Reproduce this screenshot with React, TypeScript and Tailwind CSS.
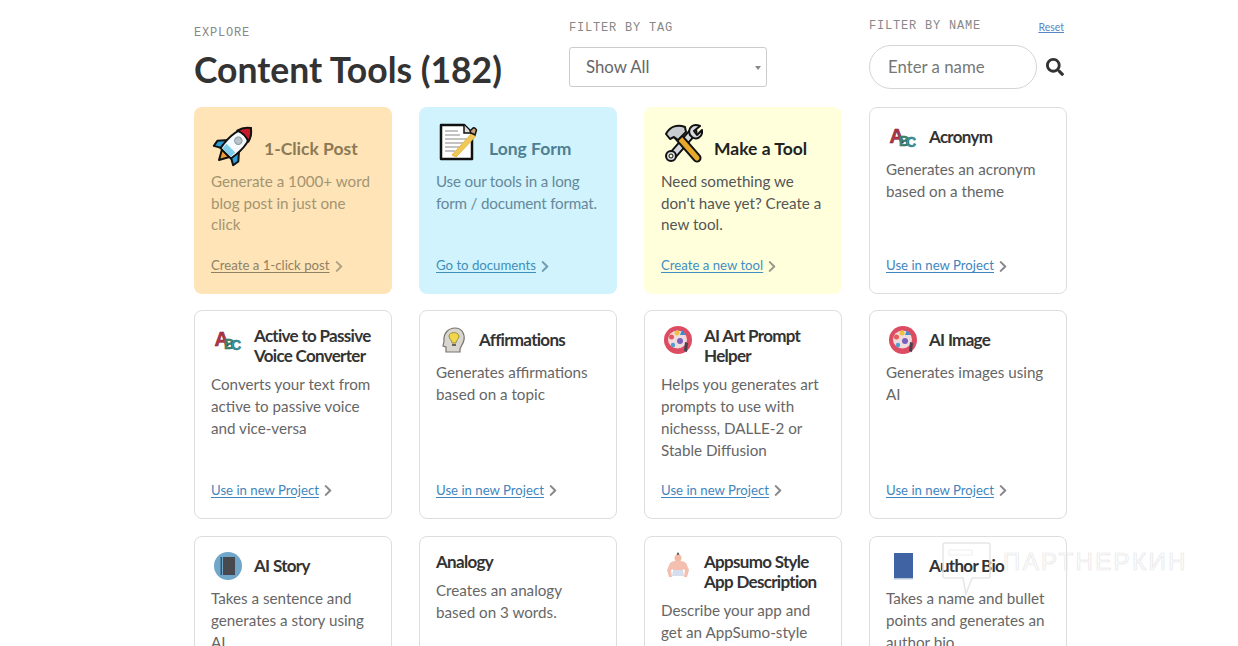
import React from "react";
import { FaChevronRight, FaSearch } from "react-icons/fa";

function Rocket() {
  return (
    <svg viewBox="0 0 40 40" className="h-10 w-10 overflow-visible">
      <g transform="translate(1 2) rotate(45 20 20) translate(-1 -0.800) scale(1.050)" stroke="#111" strokeWidth="1.900" strokeLinejoin="round">
        <path d="M15 31 L20 40 L25 31Z" fill="#f39a2d" />
        <path d="M13 20 L6 28 L7 34 L14 30Z" fill="#2b9fd6" />
        <path d="M27 20 L34 28 L33 34 L26 30Z" fill="#2b9fd6" />
        <path d="M20 -3 C27 3 30 13 27 31 H13 C10 13 13 3 20 -3Z" fill="#f4fafd" />
        <path d="M20 -3 C24 0 26.500 4 27.500 8 C23 6 17 6 12.500 8 C13.500 4 16 0 20 -3Z" fill="#c9172b" />
        <circle cx="20" cy="14" r="3.500" fill="#b9c3cb" strokeWidth="1" stroke="#8d99a3" />
        <path d="M14 24 H26 L25.500 30 H14.500Z" fill="#7fcdea" stroke="none" />
      </g>
    </svg>
  );
}

function Doc() {
  return (
    <svg viewBox="0 0 40 40" className="h-10 w-10">
      <path d="M3 2 H26 L34 10 V36 H3Z" fill="#fff" stroke="#111" strokeWidth="2.500" strokeLinejoin="round" />
      <path d="M26 2 V10 H34" fill="#ddd" stroke="#111" strokeWidth="1.500" />
      <path d="M7 8 H20 M7 12 H22 M7 16 H30 M7 20 H28 M7 24 H22 M7 28 H17" stroke="#888" strokeWidth="1" />
      <path d="M14 32 L34 10 L38 13 L18 34Z" fill="#f0c75a" stroke="#e8b93a" strokeWidth="1" />
      <path d="M32 8 L35 5 Q37 4 38.500 7 L37 12 L33 10Z" fill="#c9a27a" stroke="#111" strokeWidth="1.500" />
    </svg>
  );
}

function Tools() {
  return (
    <svg viewBox="0 0 40 40" className="h-10 w-10">
      <path d="M9 33 L30 9" stroke="#111" strokeWidth="9" strokeLinecap="round" />
      <path d="M9 33 L30 9" stroke="#d4d8dc" strokeWidth="5" strokeLinecap="round" />
      <circle cx="8" cy="33" r="5" fill="#d4d8dc" stroke="#111" strokeWidth="2" />
      <circle cx="8" cy="33" r="2" fill="#ffffdc" stroke="#111" strokeWidth="1" />
      <path d="M27 12 C24 5 30 0 37 3 L31 8 L34 12 L39 7 C40 15 33 17 29 14Z" fill="#d4d8dc" stroke="#111" strokeWidth="2" strokeLinejoin="round" />
      <path d="M34 35 L13 11" stroke="#111" strokeWidth="9" strokeLinecap="round" />
      <path d="M34 35 L13 11" stroke="#e8a92b" strokeWidth="5" strokeLinecap="round" />
      <path d="M3 11 C7 3 15 1 22 4 L23 9 L15 17 L11 14 L7 16Z" fill="#c8ccd0" stroke="#111" strokeWidth="2" strokeLinejoin="round" />
    </svg>
  );
}

function Abc() {
  return (
    <svg viewBox="0 0 30 30" className="h-[30px] w-[30px]">
      <text x="1.500" y="21" fontFamily="Liberation Sans" fontWeight="700" fontSize="20" fill="#b5354c" stroke="#7c1f33" strokeWidth=".6">A</text>
      <text x="11" y="24" fontFamily="Liberation Sans" fontWeight="700" fontSize="14" fill="#3f8f74" stroke="#23594a" strokeWidth=".5">B</text>
      <text x="18" y="25" fontFamily="Liberation Sans" fontWeight="700" fontSize="14" fill="#3aa0a8" stroke="#1f6268" strokeWidth=".5">C</text>
    </svg>
  );
}

function Head() {
  return (
    <svg viewBox="0 0 30 30" className="h-[30px] w-[30px]">
      <path d="M8 27 V22 L5 21 L6 16 C5 8 11 3 17 3 C24 3 27 9 26 15 C25 19 23 21 22 24 V27Z" fill="#d8d6cf" stroke="#77746c" strokeWidth="1.200" />
      <path d="M11 11 C11 7 20 6 21 11 C21 14 18 15 18 18 H14 C14 15 11 14 11 11Z" fill="#f2d649" stroke="#8a7b2c" strokeWidth=".8" />
      <path d="M14 19 H18 V21 H14Z" fill="#666" />
    </svg>
  );
}

function Palette() {
  return (
    <svg viewBox="0 0 30 30" className="h-[30px] w-[30px]">
      <circle cx="15" cy="15" r="14" fill="#dc4d63" />
      <ellipse cx="14.500" cy="14.500" rx="9.500" ry="9" fill="#f0dcdc" />
      <circle cx="8.500" cy="12" r="2.500" fill="#e65a5a" />
      <circle cx="14" cy="8" r="2.500" fill="#f0c040" />
      <path d="M19 5 L23 10 H17Z" fill="#3a8fd0" />
      <circle cx="17" cy="16" r="3" fill="#7a5fc0" />
      <circle cx="10" cy="20" r="2.200" fill="#4fa0d0" />
      <path d="M22 17 L25 18 L24 27 L21 26Z" fill="#4a4050" />
    </svg>
  );
}

function BookCircle() {
  return (
    <svg viewBox="0 0 30 30" className="h-[30px] w-[30px]">
      <circle cx="15" cy="15" r="14" fill="#6fa6c9" />
      <rect x="10" y="6" width="12" height="18" fill="#48494f" />
      <rect x="7.500" y="6" width="1.500" height="18" fill="#35546b" />
    </svg>
  );
}

function Sumo() {
  return (
    <svg viewBox="0 0 30 30" className="h-[30px] w-[30px]">
      <path d="M15 1 L17 5 H13Z" fill="#333" />
      <circle cx="15" cy="7" r="3.500" fill="#f2b9a3" />
      <path d="M7 12 C10 9 20 9 23 12 L26 19 L24 26 H21 L22 19 L20 18 V23 H10 V18 L8 19 L9 26 H6 L4 19Z" fill="#f4bfae" />
      <path d="M10 19 H20 L21 25 H9Z" fill="#d4deee" />
    </svg>
  );
}

function Book() {
  return (
    <svg viewBox="0 0 30 30" className="h-[30px] w-[30px]">
      <rect x="6" y="2" width="19" height="25" fill="#3f63a3" />
      <rect x="6" y="27" width="19" height="1.500" fill="#b9c6dc" />
    </svg>
  );
}

type Tool = { t: string; d: string; i?: React.ReactNode };

const first: { t: string; d: string; l: string; i: React.ReactNode; card: string; title: string; body: string; link: string; chev: string }[] = [
  { t: "1-Click Post", d: "Generate a 1000+ word blog post in just one click", l: "Create a 1-click post", i: <Rocket />, card: "bg-[#ffe4b8]", title: "text-[#8b7a55]", body: "text-[#a39471]", link: "text-[#8f8163]", chev: "text-[#b0a384]" },
  { t: "Long Form", d: "Use our tools in a long form / document format.", l: "Go to documents", i: <Doc />, card: "bg-[#d0f3fe]", title: "text-[#4f7f90]", body: "text-[#66899a] -mr-[8px] tracking-[-0.2px]", link: "text-[#3f8fb8]", chev: "text-[#6f9db2]" },
  { t: "Make a Tool", d: "Need something we don't have yet? Create a new tool.", l: "Create a new tool", i: <Tools />, card: "bg-[#ffffdc]", title: "text-[#222222]", body: "text-[#555555]", link: "text-[#3f8fc4]", chev: "text-[#9a9a8a]" },
];

const tools: Tool[] = [
  { t: "Acronym", d: "Generates an acronym based on a theme", i: <Abc /> },
  { t: "Active to Passive Voice Converter", d: "Converts your text from active to passive voice and vice-versa", i: <Abc /> },
  { t: "Affirmations", d: "Generates affirmations based on a topic", i: <Head /> },
  { t: "AI Art Prompt Helper", d: "Helps you generates art prompts to use with nichesss, DALLE-2 or Stable Diffusion", i: <Palette /> },
  { t: "AI Image", d: "Generates images using AI", i: <Palette /> },
  { t: "AI Story", d: "Takes a sentence and generates a story using AI", i: <BookCircle /> },
  { t: "Analogy", d: "Creates an analogy based on 3 words." },
  { t: "Appsumo Style App Description", d: "Describe your app and get an AppSumo-style description", i: <Sumo /> },
  { t: "Author Bio", d: "Takes a name and bullet points and generates an author bio.", i: <Book /> },
];

function FooterLink({ label, link, chev }: { label: string; link: string; chev: string }) {
  return (
    <div className="mt-auto flex h-[16px] items-center gap-[4px]">
      <a className={`text-[13.200px] underline underline-offset-2 ${link}`}>{label}</a>
      <FaChevronRight className={`h-[13px] w-[10px] ${chev}`} />
    </div>
  );
}

function ToolCard({ tool }: { tool: Tool }) {
  return (
    <div className="flex flex-col rounded-lg border border-[#dddddd] bg-white px-[16px] pt-[14px] pb-[20px] nth-4:pb-[19px]">
      <div className="mb-[7px] flex items-start">
        {tool.i && <div className="ml-[2px] mr-[11px] h-[29px] w-[30px] shrink-0">{tool.i}</div>}
        <h3 className={`flex items-center text-[17px] leading-[20px] font-bold tracking-[-0.7px] text-[#333333] ${tool.i ? "min-h-[29px] pt-px" : "pt-px"}`}>{tool.t}</h3>
      </div>
      <p className="mb-4 text-[15.200px] leading-[22px] text-[#666666]">{tool.d}</p>
      <FooterLink label="Use in new Project" link="text-[#3f86bd]" chev="text-[#8a8a8a]" />
    </div>
  );
}

function Watermark() {
  return (
    <div className="pointer-events-none absolute left-[942px] top-[542px] flex items-start">
      <svg viewBox="0 0 50 55" className="h-[55px] w-[50px]">
        <path d="M3 1 H46 Q48 1 48 3 V34 Q48 36 46 36 H30 L24 52 L21 36 H3 Q1 36 1 34 V3 Q1 1 3 1Z" fill="none" stroke="#e6e6e6" strokeWidth="1.500" />
        <path d="M7 13 H30 V8 H7Z" fill="none" stroke="#eeeeee" />
      </svg>
      <span className="ml-[11px] mt-[6px] text-[24px] leading-[28px] tracking-[2.400px] text-transparent [-webkit-text-stroke:0.7px_#e6e6e6] [font-family:'Liberation_Sans',sans-serif]">ПАРТНЕРКИН</span>
    </div>
  );
}

const mono = "text-[12px] leading-[14px] tracking-[0.8px] text-[#888888] [font-family:'Liberation_Mono',monospace]";

export default function App() {
  return (
    <div className="relative h-[646px] overflow-hidden bg-white pl-[194px] [font-family:Lato,'Liberation_Sans',sans-serif]">
      <div className="flex h-[107px] w-[873px]">
        <div className="w-[375px] pt-[26px]">
          <div className={mono}>EXPLORE</div>
          <h1 className="mt-[10px] whitespace-nowrap text-[35.500px] leading-[40px] font-bold text-[#333333]">Content Tools (182)</h1>
        </div>
        <div className="w-[198px] pt-[21px]">
          <div className={mono}>FILTER BY TAG</div>
          <div className="relative mt-[12px] flex h-[40px] items-center rounded-[3px] border border-[#cccccc] pl-4 text-[16.800px] text-[#666666]">
            Show All
            <span className="absolute right-[5px] top-[18px] h-0 w-0 border-x-[3px] border-t-[4px] border-x-transparent border-t-[#888888]" />
          </div>
        </div>
        <div className="ml-[102px] w-[198px] pt-[17px]">
          <div className="flex items-center justify-between pr-[3px]">
            <span className={mono}>FILTER BY NAME</span>
            <a className="mt-[3px] text-[10.500px] leading-[14px] text-[#5b86c4] underline">Reset</a>
          </div>
          <div className="mt-[11px] flex items-center">
            <div className="flex h-[44px] w-[168px] items-center rounded-full border border-[#d5d5d5] pl-[18px] text-[16.800px] text-[#777777]">Enter a name</div>
            <FaSearch className="ml-[9px] h-[18px] w-[18px] text-[#333333]" />
          </div>
        </div>
      </div>
      <div className="grid w-[873px] grid-cols-[198px_198px_198px_198px] grid-rows-[187px_209px_auto] gap-x-[27px] gap-y-[16.400px]">
        {first.map((c) => (
          <div key={c.t} className={`flex flex-col rounded-lg px-[17px] pt-[16px] pb-[20px] ${c.card}`}>
            <div className="mb-[6px] flex h-[42px] items-center">
              <div className="ml-[2px] mr-[11px] mt-[-3px] h-10 w-10 shrink-0">{c.i}</div>
              <h3 className={`mt-[9px] text-[17.500px] leading-[20px] font-bold ${c.title}`}>{c.t}</h3>
            </div>
            <p className={`text-[15.200px] leading-[21.500px] ${c.body}`}>{c.d}</p>
            <FooterLink label={c.l} link={c.link} chev={c.chev} />
          </div>
        ))}
        {tools.map((x) => (
          <ToolCard key={x.t} tool={x} />
        ))}
      </div>
      <Watermark />
    </div>
  );
}
